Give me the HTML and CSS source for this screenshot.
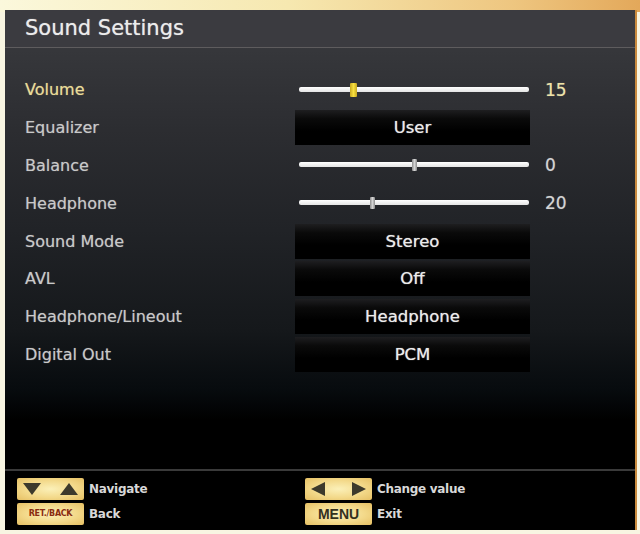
FILE: index.html
```html
<!DOCTYPE html>
<html>
<head>
<meta charset="utf-8">
<link rel="stylesheet" href="styles.css">
</head>
<body>
<div class="panel">
  <div class="header"><h1 class="title">Sound Settings</h1></div>
  <div class="rows">
    <div class="row active">
      <div class="label">Volume</div>
      <div class="slider"><div class="track"></div><div class="knob yellow" style="left:22%"></div></div>
      <div class="value">15</div>
    </div>
    <div class="row">
      <div class="label">Equalizer</div>
      <div class="btn">User</div>
      <div class="value"></div>
    </div>
    <div class="row">
      <div class="label">Balance</div>
      <div class="slider"><div class="track"></div><div class="knob" style="left:49%"></div></div>
      <div class="value">0</div>
    </div>
    <div class="row">
      <div class="label">Headphone</div>
      <div class="slider"><div class="track"></div><div class="knob" style="left:31%"></div></div>
      <div class="value">20</div>
    </div>
    <div class="row">
      <div class="label">Sound Mode</div>
      <div class="btn">Stereo</div>
      <div class="value"></div>
    </div>
    <div class="row">
      <div class="label">AVL</div>
      <div class="btn">Off</div>
      <div class="value"></div>
    </div>
    <div class="row">
      <div class="label">Headphone/Lineout</div>
      <div class="btn">Headphone</div>
      <div class="value"></div>
    </div>
    <div class="row">
      <div class="label">Digital Out</div>
      <div class="btn">PCM</div>
      <div class="value"></div>
    </div>
  </div>
  <div class="spacer"></div>
  <div class="footer">
    <div class="hint">
      <div class="key arrows">
        <svg width="20" height="14" viewBox="0 0 20 14"><polygon points="1,1 19,1 10,13" class="tri"/></svg>
        <svg width="20" height="14" viewBox="0 0 20 14"><polygon points="1,13 19,13 10,1" class="tri"/></svg>
      </div>
      <span class="hint-text">Navigate</span>
    </div>
    <div class="hint">
      <div class="key arrows">
        <svg width="16" height="16" viewBox="0 0 16 16"><polygon points="1,8 15,1 15,15" class="tri"/></svg>
        <svg width="16" height="16" viewBox="0 0 16 16"><polygon points="15,8 1,1 1,15" class="tri"/></svg>
      </div>
      <span class="hint-text">Change value</span>
    </div>
    <div class="hint">
      <div class="key ret">RET./BACK</div>
      <span class="hint-text">Back</span>
    </div>
    <div class="hint">
      <div class="key menu">MENU</div>
      <span class="hint-text">Exit</span>
    </div>
  </div>
</div>
</body>
</html>
```
FILE: styles.css
```css
html, body {
  margin: 0;
  padding: 0;
}
body {
  width: 640px;
  height: 534px;
  overflow: hidden;
  background:
    linear-gradient(to right, #fbf8dc 0%, #f6e8b0 45%, #eec680 80%, #e3a85a 100%) top left / 100% 12px no-repeat,
    #f8f5e2;
  padding-top: 10px;
  padding-left: 5px;
  box-sizing: border-box;
  font-family: "DejaVu Sans", sans-serif;
}
.panel {
  width: 630px;
  height: 520px;
  display: flex;
  flex-direction: column;
  border-right: 2px solid #c98a3e;
  box-sizing: content-box;
  background: linear-gradient(#3d3d42 0px, #36373b 40px, #2c2d31 120px, #212327 220px, #15181b 320px, #070b0e 380px, #000 410px, #000 100%);
}
.header {
  height: 37px;
  border-bottom: 1px solid #5e5c5e;
  padding-left: 20px;
  background: #3b3b40;
}
.title {
  margin: 0;
  padding-top: 6px;
  font-size: 21px;
  font-weight: normal;
  color: #ececec;
  text-shadow: 0 0 1px rgba(255, 255, 255, 0.6);
}
.rows {
  padding-top: 23px;
  padding-left: 20px;
}
.row {
  display: grid;
  grid-template-columns: 255px 235px 60px;
  column-gap: 15px;
  height: 37.8px;
  align-items: center;
}
.label {
  font-size: 16px;
  color: #c9c9c9;
  text-shadow: 0 0 1px rgba(220, 220, 220, 0.5);
}
.row.active .label {
  color: #eadc98;
  text-shadow: 0 0 1px rgba(234, 220, 152, 0.6);
}
.value {
  font-size: 17px;
  color: #d4d4d4;
  text-shadow: 0 0 1px rgba(220, 220, 220, 0.5);
}
.row.active .value {
  color: #efe3a6;
}
.slider {
  position: relative;
  height: 16px;
  margin: 0 1px 0 4px;
}
.track {
  position: absolute;
  left: 0;
  right: 0;
  top: 5px;
  height: 5px;
  border-radius: 2px;
  background: linear-gradient(#ffffff, #e4e4e4);
}
.knob {
  position: absolute;
  top: 2px;
  width: 5px;
  height: 12px;
  border-radius: 1px;
  background: linear-gradient(to right, #8d8d8d, #d4d4d4, #8d8d8d);
}
.knob.yellow {
  top: 1px;
  width: 7px;
  height: 14px;
  background: linear-gradient(to right, #c8a820, #f8e040, #c8a820);
}
.btn {
  height: 35px;
  display: flex;
  align-items: center;
  justify-content: center;
  background: linear-gradient(#1e1e20 0%, #0a0a0a 25%, #000 60%, #000 100%);
  color: #ececec;
  font-size: 16.5px;
  text-shadow: 0 0 1px rgba(255, 255, 255, 0.7);
}
.spacer {
  flex: 1;
}
.footer {
  height: 61px;
  border-top: 2px solid #3a3a3a;
  background: #000;
  display: grid;
  grid-template-columns: 288px 300px;
  grid-auto-rows: 23px;
  row-gap: 2px;
  padding: 6px 0 0 12px;
  box-sizing: border-box;
}
.hint {
  display: flex;
  align-items: center;
  gap: 5px;
}
.key {
  width: 67px;
  height: 22px;
  box-sizing: border-box;
  border-radius: 2px;
  background: radial-gradient(ellipse at center, #fbf0b8 0%, #f3d98a 55%, #e6c064 100%);
  display: flex;
  align-items: center;
  justify-content: center;
}
.key.arrows {
  justify-content: space-between;
  padding: 0 5px;
}
.tri {
  fill: #3d3a2c;
}
.key.ret {
  font-size: 8px;
  font-weight: bold;
  color: #8a2c10;
  letter-spacing: -0.3px;
}
.key.menu {
  font-size: 14px;
  font-weight: bold;
  color: #34301e;
  font-family: "Liberation Sans", sans-serif;
}
.hint-text {
  color: #d8d8d8;
  font-size: 12px;
  font-weight: bold;
  letter-spacing: -0.3px;
}
```
